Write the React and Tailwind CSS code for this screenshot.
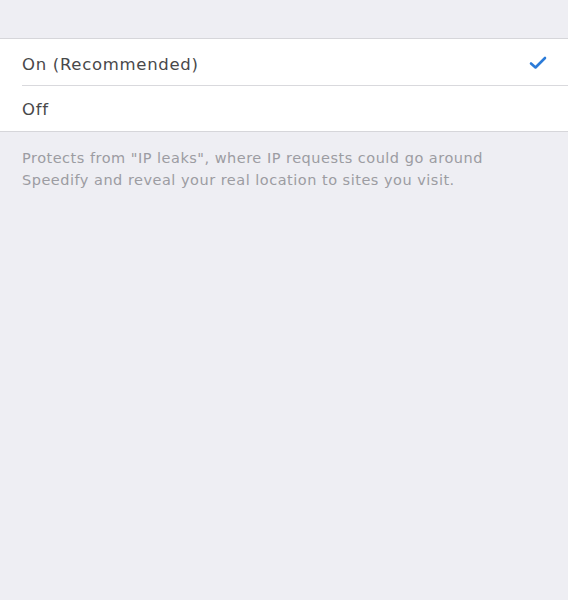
import React, { useState } from 'react';

const options = [
  { id: 'on', label: 'On (Recommended)' },
  { id: 'off', label: 'Off' }
];

const App = () => {
  const [selected, setSelected] = useState('on');

  return (
    <div className="min-h-[600px] bg-[#eeeef3] pt-[38px] font-['DejaVu_Sans',sans-serif]">
      <div className="bg-white border-y border-[#d6d6da]">
        {options.map((opt, i) => (
          <div key={opt.id} className="pl-[22px]">
            <button
              onClick={() => setSelected(opt.id)}
              className={`w-full flex items-center justify-between pr-[21px] text-left ${i === 0 ? 'h-[47px] pt-[6px] border-b border-[#d9d9dd]' : 'h-[45px] pt-[3px]'}`}
            >
              <span className="text-[16.5px] text-[#48484a] tracking-[0.7px]">{opt.label}</span>
              {selected === opt.id && (
                <svg width="18" height="15" viewBox="0 0 18 15" fill="none" className="-mt-[5px]">
                  <path d="M2 8.5 L6.5 12.5 L16 3" stroke="#2b7bd8" strokeWidth="2.6" strokeLinecap="round" strokeLinejoin="round" />
                </svg>
              )}
            </button>
          </div>
        ))}
      </div>
      <p className="px-[22px] pt-[15px] text-[14.5px] leading-[22px] text-[#9c9ca2] tracking-[0.5px] whitespace-nowrap">
        Protects from "IP leaks", where IP requests could go around
        <br />
        Speedify and reveal your real location to sites you visit.
      </p>
    </div>
  );
};

export default App;
